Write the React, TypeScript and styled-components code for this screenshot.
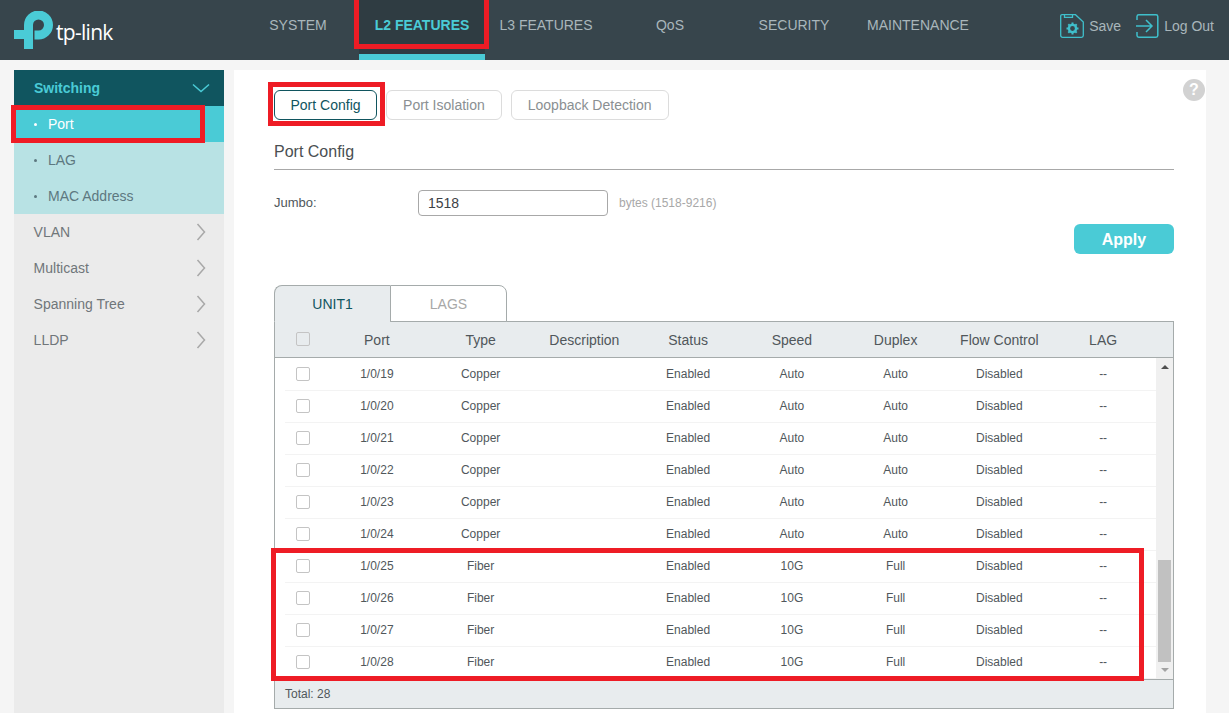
import React from "react";
import styled, { createGlobalStyle } from "styled-components";

const Global = createGlobalStyle`
  html, body { margin: 0; padding: 0; background: #f5f5f5; }
  body { font-family: "Liberation Sans", Arial, sans-serif; }
  * { box-sizing: border-box; }
`;

const Page = styled.div`
  position: relative;
  width: 1229px;
  height: 713px;
  overflow: hidden;
  background: #f5f5f5;
`;

const Header = styled.header`
  display: flex;
  align-items: stretch;
  height: 60px;
  background: #37454c;
`;
const LogoWrap = styled.div`
  width: 236px;
  display: flex;
  align-items: center;
  padding-left: 14px;
`;
const LogoMark = styled.svg`
  flex: none;
  margin-top: -1px;
`;
const LogoText = styled.span`
  font-family: "Open Sans", sans-serif;
  font-weight: 400;
  font-size: 21px;
  letter-spacing: -0.7px;
  color: #fff;
  margin: 3px 0 0 3px;
`;
const Nav = styled.nav`
  display: flex;
`;
const NavItem = styled.div<{ $active?: boolean }>`
  width: ${(p) => (p.$active ? 126 : 124)}px;
  margin: 0 ${(p) => (p.$active ? -1 : 0)}px;
  display: flex;
  align-items: center;
  justify-content: center;
  padding-bottom: 5px;
  font-size: 14px;
  font-weight: ${(p) => (p.$active ? 700 : 400)};
  color: ${(p) => (p.$active ? "#4acbd6" : "#a9b6bb")};
  background: ${(p) => (p.$active ? "#2f3c42" : "transparent")};
  border-bottom: 6px solid ${(p) => (p.$active ? "#4acbd6" : "transparent")};
  white-space: nowrap;
`;
const Actions = styled.div`
  margin-left: auto;
  display: flex;
  align-items: center;
  padding: 0 15px 8px 0;
`;
const Action = styled.div`
  display: flex;
  align-items: center;
  gap: 5px;
  font-size: 14px;
  color: #a9b6bb;
  margin-left: 15px;
`;

const Body = styled.div`
  display: flex;
  height: 653px;
  padding: 10px 23px 0 14px;
  gap: 10px;
`;
const Sidebar = styled.aside`
  flex: none;
  width: 210px;
  background: #ebebeb;
`;
const MenuHead = styled.div`
  height: 36px;
  display: flex;
  align-items: center;
  justify-content: space-between;
  padding: 0 14px 0 20px;
  background: #10555f;
  color: #4acbd6;
  font-size: 14px;
  font-weight: 700;
`;
const SubMenu = styled.div`
  background: #b8e2e4;
`;
const SubItem = styled.div<{ $active?: boolean }>`
  height: 36px;
  display: flex;
  align-items: center;
  padding-left: 20px;
  font-size: 14px;
  color: ${(p) => (p.$active ? "#fff" : "#5d7880")};
  background: ${(p) => (p.$active ? "#4acbd6" : "transparent")};
`;
const Dot = styled.span`
  width: 3px;
  height: 3px;
  border-radius: 50%;
  background: currentColor;
  margin-right: 11px;
`;
const MenuItem = styled.div`
  height: 36px;
  display: flex;
  align-items: center;
  justify-content: space-between;
  padding: 0 18px 0 19.6px;
  font-size: 14px;
  color: #70767a;
`;

const Main = styled.main`
  position: relative;
  flex: 1;
  min-width: 0;
  background: #fff;
  padding: 20px 32px 0 40px;
`;
const Help = styled.div`
  position: absolute;
  top: 9px;
  right: 1px;
  width: 22px;
  height: 22px;
  border-radius: 50%;
  background: #d2d2d2;
  color: #fff;
  font-size: 16px;
  font-weight: 700;
  display: flex;
  align-items: center;
  justify-content: center;
`;
const SubTabs = styled.div`
  display: flex;
  gap: 9px;
`;
const SubTab = styled.div<{ $active?: boolean }>`
  height: 30px;
  padding: 0 ${(p) => (p.$active ? 15.5 : 16)}px;
  display: flex;
  align-items: center;
  font-size: 14px;
  border-radius: 6px;
  border: 1px solid ${(p) => (p.$active ? "#10555f" : "#dcdcdc")};
  color: ${(p) => (p.$active ? "#10555f" : "#8a8f92")};
`;
const Title = styled.div`
  height: 50px;
  padding-top: 23px;
  border-bottom: 1px solid #a8a8a8;
  font-size: 16px;
  color: #4a4f52;
`;
const FormRow = styled.div`
  display: flex;
  align-items: center;
  margin-top: 20px;
  height: 26px;
`;
const Label = styled.div`
  width: 144px;
  padding-bottom: 1px;
  font-size: 13px;
  color: #50575b;
`;
const Input = styled.div`
  width: 190px;
  height: 26px;
  border: 1px solid #a8a8a8;
  border-radius: 4px;
  padding-left: 9px;
  display: flex;
  align-items: center;
  font-size: 14px;
  color: #3d4246;
`;
const Hint = styled.div`
  margin-left: 11px;
  font-size: 12px;
  color: #a8a8a8;
`;
const ApplyRow = styled.div`
  display: flex;
  justify-content: flex-end;
  margin-top: 8px;
`;
const Apply = styled.div`
  width: 100px;
  height: 30px;
  padding-top: 1px;
  border-radius: 6px;
  background: #4acbd6;
  color: #fff;
  font-size: 16px;
  font-weight: 700;
  display: flex;
  align-items: center;
  justify-content: center;
`;
const TableTabs = styled.div`
  display: flex;
  margin-top: 31px;
  height: 37px;
  position: relative;
  z-index: 1;
  margin-bottom: -1px;
`;
const TableTab = styled.div<{ $active?: boolean; $first?: boolean }>`
  width: ${(p) => (p.$first ? 116 : 117)}px;
  display: flex;
  align-items: center;
  justify-content: center;
  font-size: 14px;
  border: 1px solid #a5abab;
  border-left-width: ${(p) => (p.$first ? 0 : 1)}px;
  border-right-width: ${(p) => (p.$first ? 0 : 1)}px;
  border-left-width: 1px;
  border-bottom-color: ${(p) => (p.$active ? "#e8ecee" : "#a5abab")};
  border-radius: ${(p) => (p.$first ? "8px 0 0 0" : "0 8px 0 0")};
  background: ${(p) => (p.$active ? "#e8ecee" : "#fff")};
  color: ${(p) => (p.$active ? "#10555f" : "#a8a8a8")};
`;
const TableBox = styled.div`
  height: 388px;
  border: 1px solid #a5abab;
  display: flex;
  flex-direction: column;
`;
const Grid = styled.div`
  display: grid;
  grid-template-columns: 40px repeat(8, 103.75px);
  align-items: center;
  text-align: center;
`;
const HeadRow = styled(Grid)`
  flex: none;
  height: 36px;
  padding-left: 10px;
  background: #e8ecee;
  border-bottom: 1px solid #a5abab;
  font-size: 14px;
  color: #50575b;
`;
const Scroller = styled.div`
  flex: 1;
  display: flex;
  min-height: 0;
`;
const Rows = styled.div`
  flex: 1;
  min-width: 0;
  padding-left: 10px;
`;
const Row = styled(Grid)`
  height: 33px;
  margin-bottom: -1px;
  font-size: 12px;
  color: #50575b;
  border-bottom: 1px solid #f3f3f3;
`;
const Check = styled.div`
  width: 14px;
  height: 14px;
  margin-left: 11px;
  border: 1px solid #c4c4c4;
  border-radius: 2px;
  background: #fff;
`;
const HeadCheck = styled(Check)`
  background: transparent;
  margin-bottom: 2px;
`;
const Scrollbar = styled.div`
  flex: none;
  width: 17px;
  background: #f0f0f0;
  display: flex;
  flex-direction: column;
  align-items: center;
  padding-top: 7px;
`;
const Arrow = styled.div<{ $down?: boolean }>`
  width: 0;
  height: 0;
  border-left: 4px solid transparent;
  border-right: 4px solid transparent;
  ${(p) => (p.$down ? "border-top: 4px solid #a3a3a3;" : "border-bottom: 4px solid #505050;")}
`;
const Thumb = styled.div`
  width: 13px;
  height: 102px;
  margin-top: auto;
  background: #c1c1c1;
`;
const ArrowDown = styled(Arrow)`
  margin: 6px 0 7px;
`;
const Footer = styled.div`
  flex: none;
  height: 29px;
  border-top: 1px solid #a5abab;
  background: #e8ecee;
  display: flex;
  align-items: center;
  padding-left: 10px;
  font-size: 12px;
  color: #50575b;
`;

const RedBox = styled.div<{ $x: number; $y: number; $w: number; $h: number }>`
  position: absolute;
  left: ${(p) => p.$x}px;
  top: ${(p) => p.$y}px;
  width: ${(p) => p.$w}px;
  height: ${(p) => p.$h}px;
  border: 5px solid #ee1c25;
  z-index: 5;
  pointer-events: none;
`;

const Chevron = ({ down }: { down?: boolean }) =>
  down ? (
    <svg width="18" height="10" viewBox="0 0 18 10" fill="none">
      <path d="M1 1.5 L9 8.5 L17 1.5" stroke="#4acbd6" strokeWidth="1.5" />
    </svg>
  ) : (
    <svg width="10" height="18" viewBox="0 0 10 18" fill="none">
      <path d="M1.5 1 L8.5 9 L1.5 17" stroke="#a8a8a8" strokeWidth="1.5" />
    </svg>
  );

const Logo = () => (
  <LogoMark width="39" height="38" viewBox="0 0 39 38" fill="none">
    <path d="M14.5 14 A10 10 0 1 1 24.5 24 H20.5" stroke="#4acbd6" strokeWidth="9" />
    <path d="M10 14 H19 V38 H10 V28 H0 V19 H10 Z" fill="#4acbd6" />
  </LogoMark>
);

const SaveIcon = () => (
  <svg width="24" height="24" viewBox="0 0 24 24" fill="none" stroke="#3fbfcb" strokeWidth="1.3">
    <path d="M2 .7 H15.5 L23.3 8 V21.5 A1.8 1.8 0 0 1 21.5 23.3 H2.5 A1.8 1.8 0 0 1 .7 21.5 V2 A1.3 1.3 0 0 1 2 .7 Z" />
    <path d="M4.5 .7 V3.4 H12.5 V.7" />
    <circle cx="12.5" cy="14.5" r="3.6" strokeWidth="2.4" />
    <path d="M12.5 8.5 V10 M12.5 19 V20.5 M6.5 14.5 H8 M17 14.5 H18.5 M8.3 10.3 L9.4 11.4 M15.6 17.6 L16.7 18.7 M16.7 10.3 L15.6 11.4 M9.4 17.6 L8.3 18.7" strokeWidth="2" />
  </svg>
);

const LogoutIcon = () => (
  <svg width="23" height="24" viewBox="0 0 23 24" fill="none" stroke="#3fbfcb" strokeWidth="1.5">
    <path d="M1 6 V2.5 A1.8 1.8 0 0 1 2.8 .8 H20 A1.8 1.8 0 0 1 21.8 2.5 V21.5 A1.8 1.8 0 0 1 20 23.2 H2.8 A1.8 1.8 0 0 1 1 21.5 V18" />
    <path d="M0 12 H15.5 M10 6 L16 12 L10 18" />
  </svg>
);

type Port = { port: string; type: string; speed: string; duplex: string };
const ports: Port[] = [19, 20, 21, 22, 23, 24, 25, 26, 27, 28].map((n) =>
  n < 25
    ? { port: `1/0/${n}`, type: "Copper", speed: "Auto", duplex: "Auto" }
    : { port: `1/0/${n}`, type: "Fiber", speed: "10G", duplex: "Full" }
);
const navItems = ["SYSTEM", "L2 FEATURES", "L3 FEATURES", "QoS", "SECURITY", "MAINTENANCE"];
const heads = ["Port", "Type", "Description", "Status", "Speed", "Duplex", "Flow Control", "LAG"];

export default function App() {
  return (
    <Page>
      <Global />
      <Header>
        <LogoWrap>
          <Logo />
          <LogoText>tp-link</LogoText>
        </LogoWrap>
        <Nav>
          {navItems.map((n) => (
            <NavItem key={n} $active={n === "L2 FEATURES"}>{n}</NavItem>
          ))}
        </Nav>
        <Actions>
          <Action><SaveIcon />Save</Action>
          <Action><LogoutIcon />Log Out</Action>
        </Actions>
      </Header>
      <Body>
        <Sidebar>
          <MenuHead>Switching<Chevron down /></MenuHead>
          <SubMenu>
            <SubItem $active><Dot />Port</SubItem>
            <SubItem><Dot />LAG</SubItem>
            <SubItem><Dot />MAC Address</SubItem>
          </SubMenu>
          {["VLAN", "Multicast", "Spanning Tree", "LLDP"].map((m) => (
            <MenuItem key={m}>{m}<Chevron /></MenuItem>
          ))}
        </Sidebar>
        <Main>
          <Help>?</Help>
          <SubTabs>
            <SubTab $active>Port Config</SubTab>
            <SubTab>Port Isolation</SubTab>
            <SubTab>Loopback Detection</SubTab>
          </SubTabs>
          <Title>Port Config</Title>
          <FormRow>
            <Label>Jumbo:</Label>
            <Input>1518</Input>
            <Hint>bytes (1518-9216)</Hint>
          </FormRow>
          <ApplyRow><Apply>Apply</Apply></ApplyRow>
          <TableTabs>
            <TableTab $active $first>UNIT1</TableTab>
            <TableTab>LAGS</TableTab>
          </TableTabs>
          <TableBox>
            <HeadRow>
              <HeadCheck />
              {heads.map((h) => <div key={h}>{h}</div>)}
            </HeadRow>
            <Scroller>
              <Rows>
                {ports.map((p) => (
                  <Row key={p.port}>
                    <Check />
                    <div>{p.port}</div>
                    <div>{p.type}</div>
                    <div />
                    <div>Enabled</div>
                    <div>{p.speed}</div>
                    <div>{p.duplex}</div>
                    <div>Disabled</div>
                    <div>--</div>
                  </Row>
                ))}
              </Rows>
              <Scrollbar>
                <Arrow />
                <Thumb />
                <ArrowDown $down />
              </Scrollbar>
            </Scroller>
            <Footer>Total: 28</Footer>
          </TableBox>
        </Main>
      </Body>
      <RedBox $x={354} $y={-5} $w={135} $h={54} />
      <RedBox $x={268} $y={82} $w={117} $h={44} />
      <RedBox $x={11} $y={105} $w={194} $h={38} />
      <RedBox $x={271} $y={548} $w={873} $h={133} />
    </Page>
  );
}
